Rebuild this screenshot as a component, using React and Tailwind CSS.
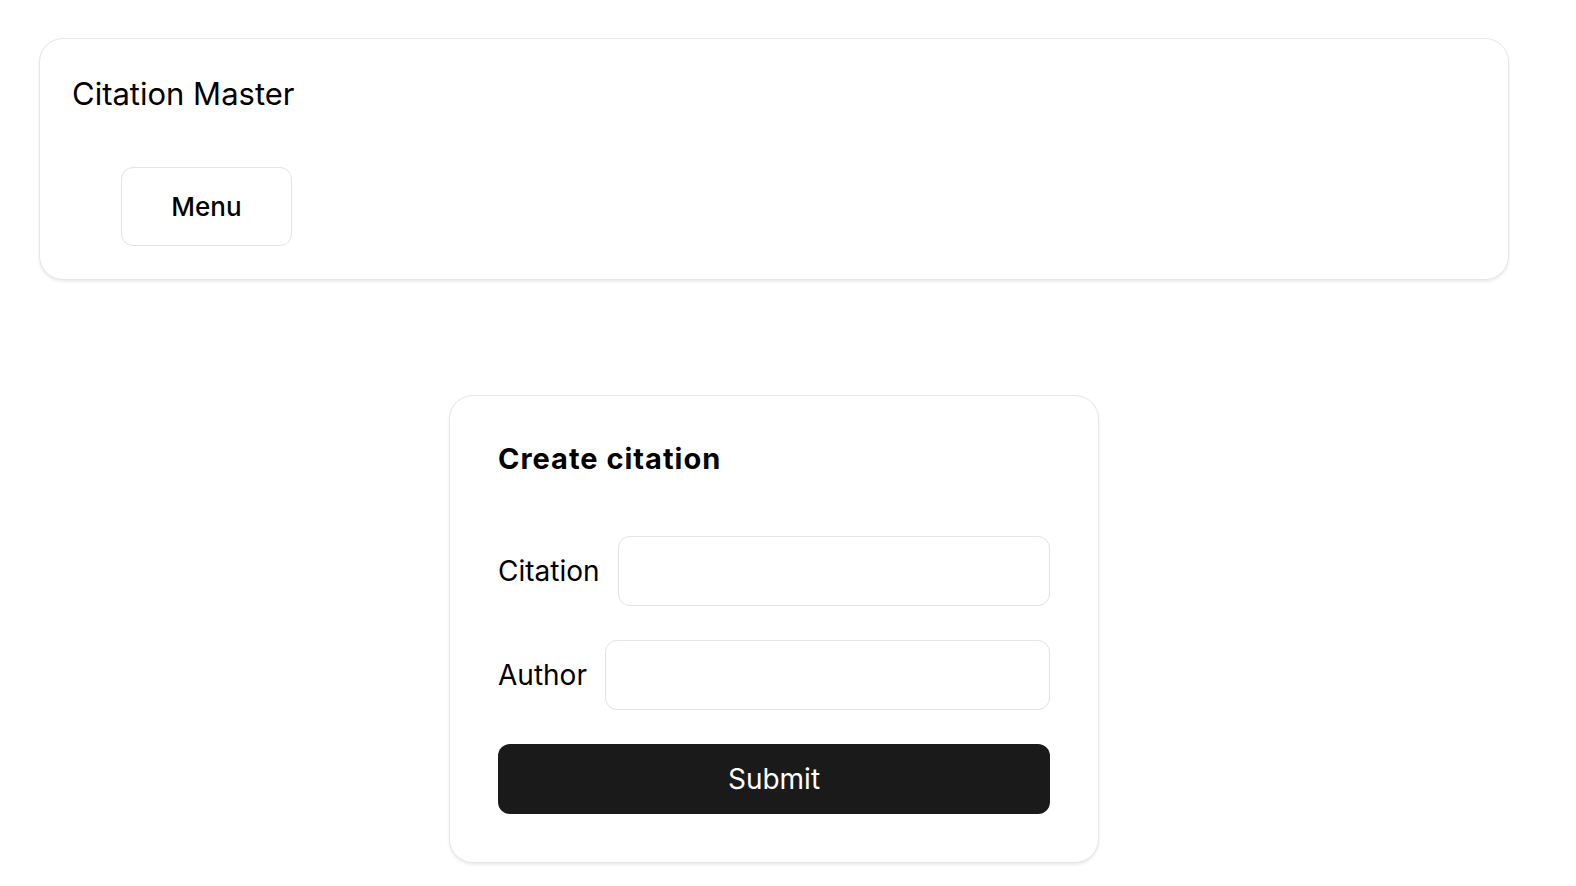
import { useState } from 'react';

export default function App() {
  const [citation, setCitation] = useState('');
  const [author, setAuthor] = useState('');

  const handleSubmit = (e) => {
    e.preventDefault();
  };

  return (
    <div className="min-h-screen bg-white pt-[38px] pl-[39px] font-['Inter',sans-serif] text-black">
      <div className="w-[1470px]">
        <header className="rounded-[24px] border border-[#e6e6e6] bg-white px-[32px] pt-[37px] pb-[33px] shadow-[0_2px_3px_rgba(0,0,0,0.08)]">
          <h1 className="text-[31px] leading-[36px] font-normal">Citation Master</h1>
          <nav className="mt-[55px] pl-[49px]">
            <button className="h-[79px] w-[171px] rounded-[12px] border border-[#e3e3e3] bg-white text-[26px] font-medium">
              Menu
            </button>
          </nav>
        </header>

        <div className="mt-[115px] flex justify-center">
          <form
            onSubmit={handleSubmit}
            className="w-[650px] rounded-[24px] border border-[#e6e6e6] bg-white px-[48px] pt-[46px] pb-[48px] shadow-[0_2px_3px_rgba(0,0,0,0.08)]"
          >
            <h2 className="text-[29px] leading-[34px] font-bold tracking-[1px]">Create citation</h2>

            <div className="mt-[60px] flex flex-col gap-[34px]">
              <label className="flex items-center gap-[18px] text-[28px]">
                Citation
                <input
                  value={citation}
                  onChange={(e) => setCitation(e.target.value)}
                  className="h-[70px] min-w-0 flex-1 rounded-[12px] border border-[#e3e3e3] px-4 outline-none"
                />
              </label>
              <label className="flex items-center gap-[18px] text-[28px]">
                Author
                <input
                  value={author}
                  onChange={(e) => setAuthor(e.target.value)}
                  className="h-[70px] min-w-0 flex-1 rounded-[12px] border border-[#e3e3e3] px-4 outline-none"
                />
              </label>
              <button
                type="submit"
                className="h-[70px] w-full rounded-[12px] bg-[#1a1a1a] text-[28px] font-normal text-white"
              >
                Submit
              </button>
            </div>
          </form>
        </div>
      </div>
    </div>
  );
}
